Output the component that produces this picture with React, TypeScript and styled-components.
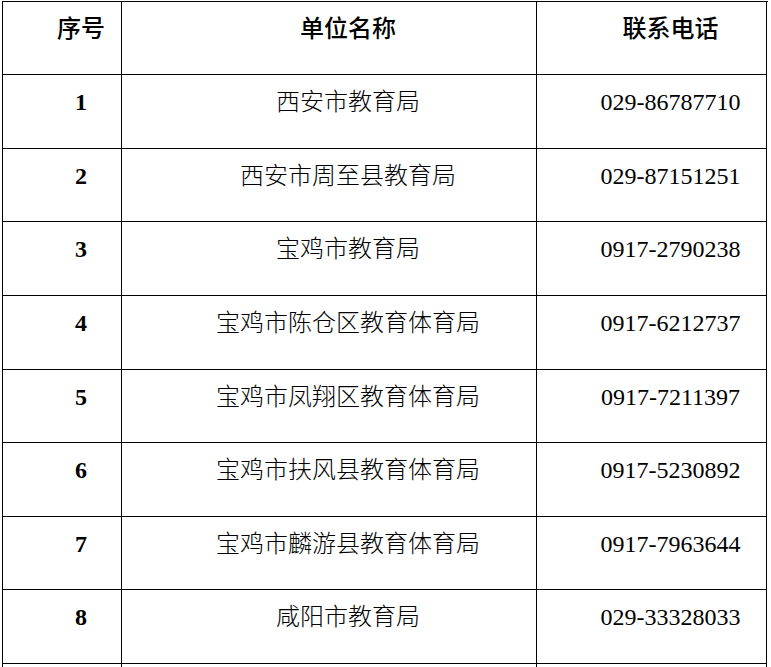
import React from 'react';
import styled, { createGlobalStyle } from 'styled-components';

const rows = [
  { no: '1', name: '西安市教育局', phone: '029-86787710', h: 74 },
  { no: '2', name: '西安市周至县教育局', phone: '029-87151251', h: 73 },
  { no: '3', name: '宝鸡市教育局', phone: '0917-2790238', h: 74 },
  { no: '4', name: '宝鸡市陈仓区教育体育局', phone: '0917-6212737', h: 74 },
  { no: '5', name: '宝鸡市凤翔区教育体育局', phone: '0917-7211397', h: 73 },
  { no: '6', name: '宝鸡市扶风县教育体育局', phone: '0917-5230892', h: 74 },
  { no: '7', name: '宝鸡市麟游县教育体育局', phone: '0917-7963644', h: 73 },
  { no: '8', name: '咸阳市教育局', phone: '029-33328033', h: 74 },
];

export default function App() {
  return (
    <>
      <GlobalStyle />
      <Table>
        <Row $h={73}>
          <HeadCell>序号</HeadCell>
          <HeadCell>单位名称</HeadCell>
          <HeadCell>联系电话</HeadCell>
        </Row>
        {rows.map((r) => (
          <Row key={r.no} $h={r.h}>
            <Cell $bold>{r.no}</Cell>
            <Cell>{r.name}</Cell>
            <Cell>{r.phone}</Cell>
          </Row>
        ))}
        {/* next row, cut off by the bottom edge */}
        <Row $h={4}>
          <Cell $open />
          <Cell $open />
          <Cell $open />
        </Row>
      </Table>
    </>
  );
}

const GlobalStyle = createGlobalStyle`
  html, body {
    margin: 0;
    padding: 0;
    background: #fff;
    overflow: hidden;
  }
`;

const Table = styled.div`
  display: flex;
  flex-direction: column;
  width: 765px;
  margin: 1px 0 0 2px;
  border-top: 1px solid #000;
  border-left: 1px solid #000;
  font-family: 'Liberation Serif', 'Noto Sans CJK SC', serif;
  font-size: 24px;
  color: #000;
`;

const Row = styled.div<{ $h: number }>`
  display: grid;
  grid-template-columns: 119px 415px 230px;
  height: ${(p) => p.$h}px;
`;

const Cell = styled.div<{ $bold?: boolean; $open?: boolean }>`
  box-sizing: border-box;
  border-right: 1px solid #000;
  border-bottom: ${(p) => (p.$open ? 'none' : '1px solid #000')};
  padding: 13px 0 0 38px;
  line-height: 28px;
  text-align: center;
  white-space: nowrap;
  font-weight: ${(p) => (p.$bold ? 700 : 300)};
`;

const HeadCell = styled(Cell)`
  font-weight: 500;
`;
